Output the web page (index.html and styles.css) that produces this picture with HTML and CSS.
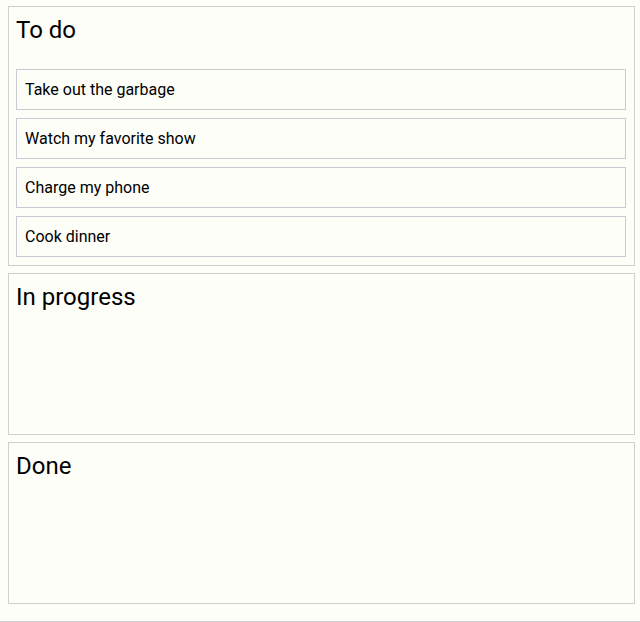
FILE: index.html
```html
<!DOCTYPE html>
<html lang="en">
<head>
<meta charset="utf-8">
<title>Board</title>
<link rel="stylesheet" href="styles.css">
</head>
<body>
<main class="board">
  <section class="column">
    <h2 class="column-title">To do</h2>
    <ul class="cards">
      <li class="card">Take out the garbage</li>
      <li class="card">Watch my favorite show</li>
      <li class="card">Charge my phone</li>
      <li class="card">Cook dinner</li>
    </ul>
  </section>
  <section class="column">
    <h2 class="column-title">In progress</h2>
  </section>
  <section class="column">
    <h2 class="column-title">Done</h2>
  </section>
</main>
</body>
</html>
```
FILE: styles.css
```css
html, body {
  margin: 0;
  padding: 0;
  background: #fefef9;
}

body {
  font-family: Roboto, "Liberation Sans", Arial, sans-serif;
  color: #000;
}

.board {
  box-sizing: border-box;
  height: 622px;
  padding: 6px 5px 0 8px;
  display: flex;
  flex-direction: column;
  gap: 7px;
  border-bottom: 1px solid #d2d2d2;
}

.column {
  box-sizing: border-box;
  min-height: 162px;
  border: 1px solid #d0d0d4;
  padding: 9px 8px 8px 7px;
}

.column-title {
  margin: 0 0 25px 0;
  font-size: 24px;
  line-height: 28px;
  font-weight: 400;
}

.cards {
  list-style: none;
  margin: 0;
  padding: 0;
  display: flex;
  flex-direction: column;
  gap: 8px;
}

.card {
  border: 1px solid #cacad2;
  padding: 10px 8px 10px 8px;
  font-size: 16px;
  line-height: 19px;
}
```
